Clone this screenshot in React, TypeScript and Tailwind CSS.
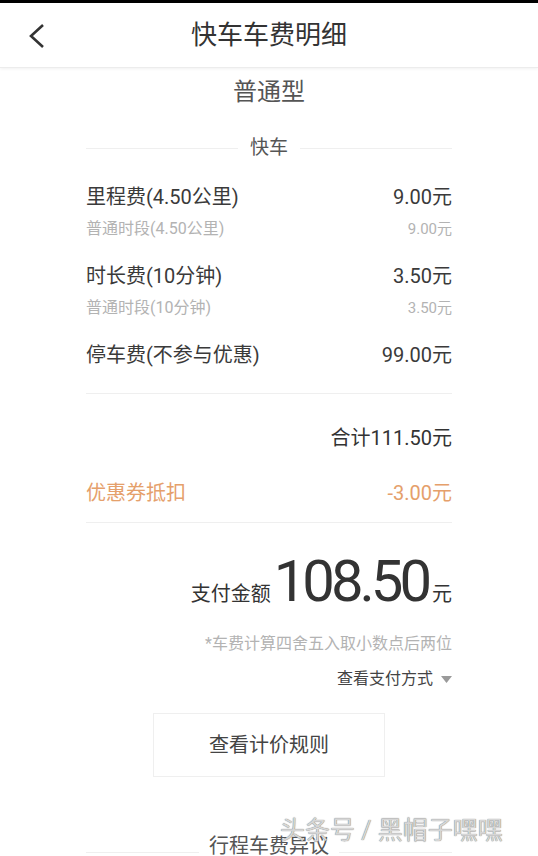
import React from "react"

const font = { fontFamily: "Roboto, 'Noto Sans CJK SC', sans-serif" }

function FeeRow({ label, value, sub, subValue }: { label: string; value: string; sub?: string; subValue?: string }) {
  return (
    <div>
      <div className="flex h-[28px] items-center justify-between text-[20px] text-[#3a3a3a]">
        <span>{label}</span>
        <span>{value}</span>
      </div>
      {sub && (
        <div className="mt-[4px] flex h-[28px] items-center justify-between text-[16px] text-[#b3b3b3]">
          <span>{sub}</span>
          <span className="text-[15px]">{subValue}</span>
        </div>
      )}
    </div>
  )
}

export default function App() {
  return (
    <div className="relative h-[856px] w-[538px] overflow-hidden bg-white" style={font}>
      <div className="h-[3px] bg-black" />
      {/* Header */}
      <div className="relative flex h-[65px] items-center justify-center border-b border-[#ececec] shadow-[0_1px_3px_rgba(0,0,0,0.06)]">
        <svg className="absolute left-[27px] top-[20px]" width="20" height="26" viewBox="0 0 20 26">
          <polyline points="16,2 4,13 16,24" fill="none" stroke="#333" strokeWidth="2.6" />
        </svg>
        <span className="text-[26px] text-[#333]">快车车费明细</span>
      </div>

      <div className="px-[86px] pt-[3px]">
        <div className="flex h-[42px] items-center justify-center text-[24px] text-[#555]">普通型</div>

        <div className="flex h-[70px] items-center gap-[12px]">
          <div className="h-px flex-1 bg-[#efefef]" />
          <span className="text-[19px] text-[#555]">快车</span>
          <div className="h-px flex-1 bg-[#efefef]" />
        </div>

        <FeeRow label="里程费(4.50公里)" value="9.00元" sub="普通时段(4.50公里)" subValue="9.00元" />
        <div className="mt-[19px]">
          <FeeRow label="时长费(10分钟)" value="3.50元" sub="普通时段(10分钟)" subValue="3.50元" />
        </div>
        <div className="mt-[19px]">
          <FeeRow label="停车费(不参与优惠)" value="99.00元" />
        </div>

        <div className="mt-[24px] h-px bg-[#efefef]" />

        <div className="mt-[30px] flex h-[28px] items-center justify-end text-[20px] text-[#333]">合计111.50元</div>

        <div className="mt-[27px] flex h-[28px] items-center justify-between text-[20px] text-[#e5a06b]">
          <span>优惠券抵扣</span>
          <span>-3.00元</span>
        </div>

        <div className="mt-[15px] h-px bg-[#efefef]" />

        <div className="mt-[27px] flex items-baseline justify-end text-[#333]">
          <span className="text-[20px]">支付金额</span>
          <span className="ml-[3px] text-[58px] leading-[62px] tracking-[-4px]">108.50</span>
          <span className="ml-[4px] text-[20px]">元</span>
        </div>

        <div className="mt-[20px] flex h-[24px] items-center justify-end text-[16px] text-[#b3b3b3]">*车费计算四舍五入取小数点后两位</div>

        <div className="mt-[11px] flex h-[24px] items-center justify-end gap-[8px] text-[16px] text-[#444]">
          <span>查看支付方式</span>
          <svg width="11" height="7" viewBox="0 0 11 7">
            <polygon points="0,0 11,0 5.5,7" fill="#9a9a9a" />
          </svg>
        </div>

        <div className="mt-[22px] flex justify-center">
          <div className="flex h-[64px] w-[232px] items-center justify-center border border-[#efefef] text-[20px] text-[#444]">
            查看计价规则
          </div>
        </div>

        <div className="mt-[55px] flex h-[28px] items-center gap-[10px]">
          <div className="mt-[12px] h-px flex-1 bg-[#efefef]" />
          <span className="text-[20px] text-[#555]">行程车费异议</span>
          <div className="mt-[12px] h-px flex-1 bg-[#efefef]" />
        </div>
      </div>

      {/* watermark */}
      <div className="absolute left-[280px] top-[812px] text-[25px] text-[#d6d6d6] [text-shadow:0_0_1px_#555]">
        头条号 / 黑帽子嘿嘿
      </div>
    </div>
  )
}
